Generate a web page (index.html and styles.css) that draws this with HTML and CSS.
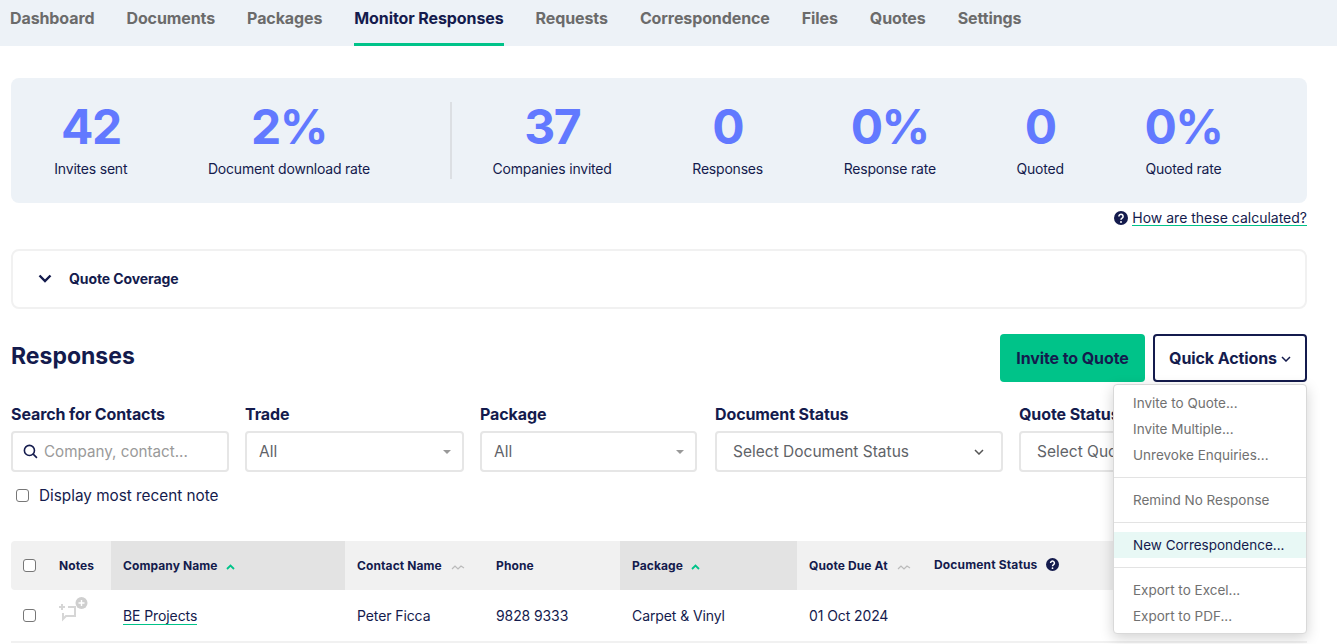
FILE: index.html
```html
<!DOCTYPE html>
<html lang="en">
<head>
    <meta charset="UTF-8">
    <meta name="viewport" content="width=device-width, initial-scale=1.0">
    <title>Monitor Responses</title>
    <link rel="stylesheet" href="styles.css">
</head>
<body>
    <nav class="tabs">
        <a class="tab">Dashboard</a>
        <a class="tab">Documents</a>
        <a class="tab">Packages</a>
        <a class="tab active">Monitor Responses</a>
        <a class="tab">Requests</a>
        <a class="tab">Correspondence</a>
        <a class="tab">Files</a>
        <a class="tab">Quotes</a>
        <a class="tab">Settings</a>
    </nav>

    <main class="page">
        <section class="stats">
            <div class="stat"><strong>42</strong><span>Invites sent</span></div>
            <div class="stat"><strong>2%</strong><span>Document download rate</span></div>
            <div class="stats-divider"></div>
            <div class="stat"><strong>37</strong><span>Companies invited</span></div>
            <div class="stat"><strong>0</strong><span>Responses</span></div>
            <div class="stat"><strong>0%</strong><span>Response rate</span></div>
            <div class="stat"><strong>0</strong><span>Quoted</span></div>
            <div class="stat"><strong>0%</strong><span>Quoted rate</span></div>
        </section>

        <div class="help-row">
            <svg class="help-icon" viewBox="0 0 16 16"><circle cx="8" cy="8" r="8" fill="#141b4d"/><path d="M5.600 6.200a2.400 2.400 0 1 1 3.700 2c-.9.6-1.300 1-1.300 1.800" fill="none" stroke="#fff" stroke-width="1.800"/><circle cx="8" cy="12.500" r="1.100" fill="#fff"/></svg>
            <a class="link">How are these calculated?</a>
        </div>

        <section class="coverage">
            <svg class="coverage-chevron" viewBox="0 0 14 9"><path d="M1.500 1.500 7 7l5.500-5.500" fill="none" stroke="#141b4d" stroke-width="2.400"/></svg>
            <span>Quote Coverage</span>
        </section>

        <header class="responses-head">
            <h2>Responses</h2>
            <div class="actions">
                <button class="btn btn-green">Invite to Quote</button>
                <button class="btn btn-outline">Quick Actions
                    <svg viewBox="0 0 10 6"><path d="M1 1l4 4 4-4" fill="none" stroke="#141b4d" stroke-width="1.500"/></svg>
                </button>
            </div>
        </header>

        <section class="filters">
            <div class="filter w-search">
                <label>Search for Contacts</label>
                <div class="field">
                    <svg class="search-icon" viewBox="0 0 14 14"><circle cx="6" cy="6" r="4.700" fill="none" stroke="#141b4d" stroke-width="1.500"/><path d="M9.500 9.500 13 13" stroke="#141b4d" stroke-width="1.500"/></svg>
                    <span class="placeholder">Company, contact...</span>
                </div>
            </div>
            <div class="filter w-trade">
                <label>Trade</label>
                <div class="field field-select"><span>All</span><i class="caret"></i></div>
            </div>
            <div class="filter w-package">
                <label>Package</label>
                <div class="field field-select"><span>All</span><i class="caret"></i></div>
            </div>
            <div class="filter w-doc">
                <label>Document Status</label>
                <div class="field field-multi"><span>Select Document Status</span>
                    <svg viewBox="0 0 10 6"><path d="M1 1l4 4 4-4" fill="none" stroke="#555" stroke-width="1.500"/></svg>
                </div>
            </div>
            <div class="filter w-quote">
                <label>Quote Status</label>
                <div class="field field-multi"><span>Select Quote Status</span></div>
            </div>
        </section>

        <label class="recent-note"><input type="checkbox"> Display most recent note</label>

        <table class="responses">
            <colgroup>
                <col class="c-check"><col class="c-notes"><col class="c-company"><col class="c-contact">
                <col class="c-phone"><col class="c-package"><col class="c-due"><col class="c-doc"><col class="c-rest">
            </colgroup>
            <thead>
                <tr>
                    <th class="cell-check"><input type="checkbox"></th>
                    <th class="cell-notes">Notes</th>
                    <th class="sorted">Company Name <svg class="sort-up" viewBox="0 0 9 6"><path d="M1 5l3.500-3.500L8 5" fill="none" stroke="#00c389" stroke-width="1.800"/></svg></th>
                    <th>Contact Name <svg class="sort-none" viewBox="0 0 14 6"><path d="M1 5l3-3 3 3 3-3 3 2" fill="none" stroke="#bbb" stroke-width="1.200"/></svg></th>
                    <th>Phone</th>
                    <th class="sorted">Package <svg class="sort-up" viewBox="0 0 9 6"><path d="M1 5l3.500-3.500L8 5" fill="none" stroke="#00c389" stroke-width="1.800"/></svg></th>
                    <th>Quote Due At <svg class="sort-none" viewBox="0 0 14 6"><path d="M1 5l3-3 3 3 3-3 3 2" fill="none" stroke="#bbb" stroke-width="1.200"/></svg></th>
                    <th class="cell-doc">Document Status <svg class="doc-help" viewBox="0 0 16 16"><circle cx="8" cy="8" r="8" fill="#141b4d"/><path d="M5.600 6.200a2.400 2.400 0 1 1 3.700 2c-.9.6-1.300 1-1.300 1.800" fill="none" stroke="#fff" stroke-width="1.800"/><circle cx="8" cy="12.500" r="1.100" fill="#fff"/></svg></th>
                    <th></th>
                </tr>
            </thead>
            <tbody>
                <tr>
                    <td class="cell-check"><input type="checkbox"></td>
                    <td class="cell-notes">
                        <svg class="note-icon" viewBox="0 0 30 26">
                            <path d="M1 10h6M4 7v6M10 10h7v9H8l-3 3v-6" fill="none" stroke="#d6d6d6" stroke-width="2"/>
                            <circle cx="23.500" cy="6" r="6" fill="#cfcfcf"/>
                            <path d="M20.500 6h6M23.500 3v6" stroke="#fff" stroke-width="1.400"/>
                        </svg>
                    </td>
                    <td><a class="link">BE Projects</a></td>
                    <td>Peter Ficca</td>
                    <td>9828 9333</td>
                    <td>Carpet &amp; Vinyl</td>
                    <td>01 Oct 2024</td>
                    <td></td>
                    <td></td>
                </tr>
            </tbody>
        </table>

        <div class="menu">
            <a>Invite to Quote...</a>
            <a>Invite Multiple...</a>
            <a>Unrevoke Enquiries...</a>
            <hr>
            <a>Remind No Response</a>
            <hr>
            <a class="hover">New Correspondence...</a>
            <hr>
            <a>Export to Excel...</a>
            <a>Export to PDF...</a>
        </div>
    </main>
</body>
</html>
```

FILE: styles.css
```css
* {
    box-sizing: border-box;
}

html, body {
    height: 644px;
    overflow: hidden;
}

body {
    margin: 0;
    font-family: Inter, "Noto Sans", sans-serif;
    font-size: 14px;
    color: #141b4d;
    background-color: #fff;
}

/* Tabs */
.tabs {
    display: flex;
    gap: 32px;
    height: 46px;
    padding-left: 10px;
    background-color: #edf2f7;
}

.tab {
    padding-top: 9px;
    font-size: 16px;
    font-weight: 700;
    letter-spacing: -0.1px;
    line-height: 18px;
    color: #6b6b6b;
}

.tab.active {
    color: #141b4d;
    border-bottom: 3px solid #00c389;
}

.page {
    position: relative;
    padding: 32px 30px 0 11px;
}

/* Stats panel */
.stats {
    display: flex;
    align-items: flex-start;
    height: 125px;
    padding: 24px 0 0 3px;
    background-color: #edf2f7;
    border-radius: 8px;
}

.stat {
    display: flex;
    flex-direction: column;
    align-items: center;
    padding: 0 40.300px;
}

.stat strong {
    font-size: 48px;
    font-weight: 700;
    letter-spacing: -1.500px;
    line-height: 50px;
    color: #6279ff;
}

.stat span {
    margin-top: 8px;
    font-size: 14px;
    letter-spacing: -0.2px;
    line-height: 17px;
}

.stats-divider {
    width: 2px;
    height: 77px;
    margin-left: 40px;
    background-color: #dcdfe3;
}

/* Help link */
.help-row {
    display: flex;
    justify-content: flex-end;
    align-items: center;
    gap: 4px;
    height: 16px;
    margin-top: 7px;
    font-size: 14px;
}

.help-icon {
    width: 14px;
    height: 14px;
}

.link {
    border-bottom: 1px solid #00c389;
    line-height: 15px;
}

/* Quote coverage */
.coverage {
    display: flex;
    align-items: center;
    gap: 17px;
    height: 60px;
    margin-top: 23px;
    padding: 0 0 1px 25px;
    border: 2px solid #f1f1f1;
    border-radius: 8px;
    font-size: 14px;
    font-weight: 700;
    letter-spacing: -0.1px;
}

.coverage-chevron {
    width: 14px;
    height: 9px;
}

/* Responses heading */
.responses-head {
    display: flex;
    justify-content: space-between;
    align-items: center;
    height: 48px;
    margin-top: 25px;
}

.responses-head h2 {
    margin: 0 0 4px;
    font-size: 23px;
    font-weight: 700;
}

.actions {
    display: flex;
    gap: 8px;
}

.btn {
    height: 48px;
    font-family: inherit;
    font-size: 16px;
    font-weight: 700;
    letter-spacing: -0.1px;
    color: #141b4d;
    border-radius: 4px;
}

.btn-green {
    width: 145px;
    background-color: #00c389;
    border: none;
}

.btn-outline {
    display: flex;
    align-items: center;
    justify-content: center;
    gap: 4px;
    width: 154px;
    background-color: #fff;
    border: 2px solid #141b4d;
}

.btn-outline svg {
    width: 10px;
    height: 6px;
    margin-top: 2px;
}

/* Filters */
.filters {
    display: flex;
    margin-top: 23px;
}

.filter label {
    display: block;
    margin-bottom: 8px;
    font-size: 16px;
    font-weight: 700;
    letter-spacing: -0.1px;
    line-height: 18px;
}

.w-search { width: 218px; margin-right: 16px; }
.w-trade { width: 219px; margin-right: 16px; }
.w-package { width: 217px; margin-right: 18px; }
.w-doc { width: 288px; margin-right: 16px; }
.w-quote { width: 288px; }

.field {
    display: flex;
    align-items: center;
    height: 41px;
    font-size: 15.500px;
    color: #5f6368;
    border: 2px solid #e6e6e6;
    border-radius: 4px;
}

.search-icon {
    width: 15px;
    height: 15px;
    margin: 0 6px 0 10px;
}

.placeholder {
    font-size: 15.200px;
    color: #9a9a9a;
}

.field-select {
    justify-content: space-between;
    padding: 0 11px 0 12px;
}

.caret {
    width: 0;
    height: 0;
    border-left: 4px solid transparent;
    border-right: 4px solid transparent;
    border-top: 4px solid #999;
}

.field-multi {
    justify-content: space-between;
    padding: 0 17px 0 16px;
    white-space: nowrap;
}

.field-multi svg {
    width: 10px;
    height: 6px;
}

.recent-note {
    display: flex;
    align-items: center;
    gap: 10px;
    height: 20px;
    margin-top: 13px;
    padding-left: 5px;
    font-size: 15.300px;
    color: #141b4d;
}

input[type="checkbox"] {
    appearance: none;
    width: 13px;
    height: 13px;
    margin: 0;
    background-color: #fff;
    border: 1px solid #777;
    border-radius: 3px;
}

/* Table */
.responses {
    width: 1296px;
    margin-top: 36px;
    table-layout: fixed;
    border-collapse: collapse;
}

.c-check { width: 36px; }
.c-notes { width: 64px; }
.c-company { width: 234px; }
.c-contact { width: 139px; }
.c-phone { width: 136px; }
.c-package { width: 177px; }
.c-due { width: 125px; }
.c-doc { width: 190px; }

.responses th {
    height: 49px;
    padding: 0 12px;
    font-size: 12px;
    font-weight: 700;
    letter-spacing: 0.1px;
    text-align: left;
    white-space: nowrap;
    background-color: #f1f1f1;
}

.responses th:first-child {
    border-radius: 4px 0 0 4px;
}

.responses th.sorted {
    background-color: #e3e3e3;
}

.responses td {
    height: 52px;
    padding: 0 12px;
    font-size: 14px;
    letter-spacing: -0.1px;
    border-bottom: 2px solid #f1f1f1;
}

.responses .cell-check {
    padding: 0 0 0 12px;
}

.responses .cell-check input {
    display: block;
}

.responses .cell-notes {
    padding: 0 0 0 12px;
}

.responses .cell-doc {
    padding-bottom: 3px;
    letter-spacing: 0.15px;
}

.sort-up {
    width: 9px;
    height: 6px;
    margin-left: 5px;
}

.sort-none {
    width: 14px;
    height: 6px;
    margin-left: 6px;
}

.doc-help {
    width: 13px;
    height: 13px;
    margin-left: 6px;
    vertical-align: -2px;
}

.note-icon {
    display: block;
    width: 30px;
    height: 26px;
    margin: -12px 0 0 -1px;
}

/* Quick actions menu */
.menu {
    position: absolute;
    top: 338px;
    right: 30px;
    width: 194px;
    height: 250px;
    padding: 5px 0;
    background-color: #fff;
    border: 1px solid #d9d9d9;
    border-radius: 4px;
    box-shadow: 0 4px 14px rgba(0, 0, 0, 0.18);
}

.menu a {
    display: block;
    height: 26px;
    padding-left: 19px;
    font-size: 13.500px;
    line-height: 26px;
    white-space: nowrap;
    color: #717171;
}

.menu a.hover {
    color: #141b4d;
    background-color: #e8f8f5;
}

.menu hr {
    height: 1px;
    margin: 9px 0;
    background-color: #e3e3e3;
    border: none;
}
```
